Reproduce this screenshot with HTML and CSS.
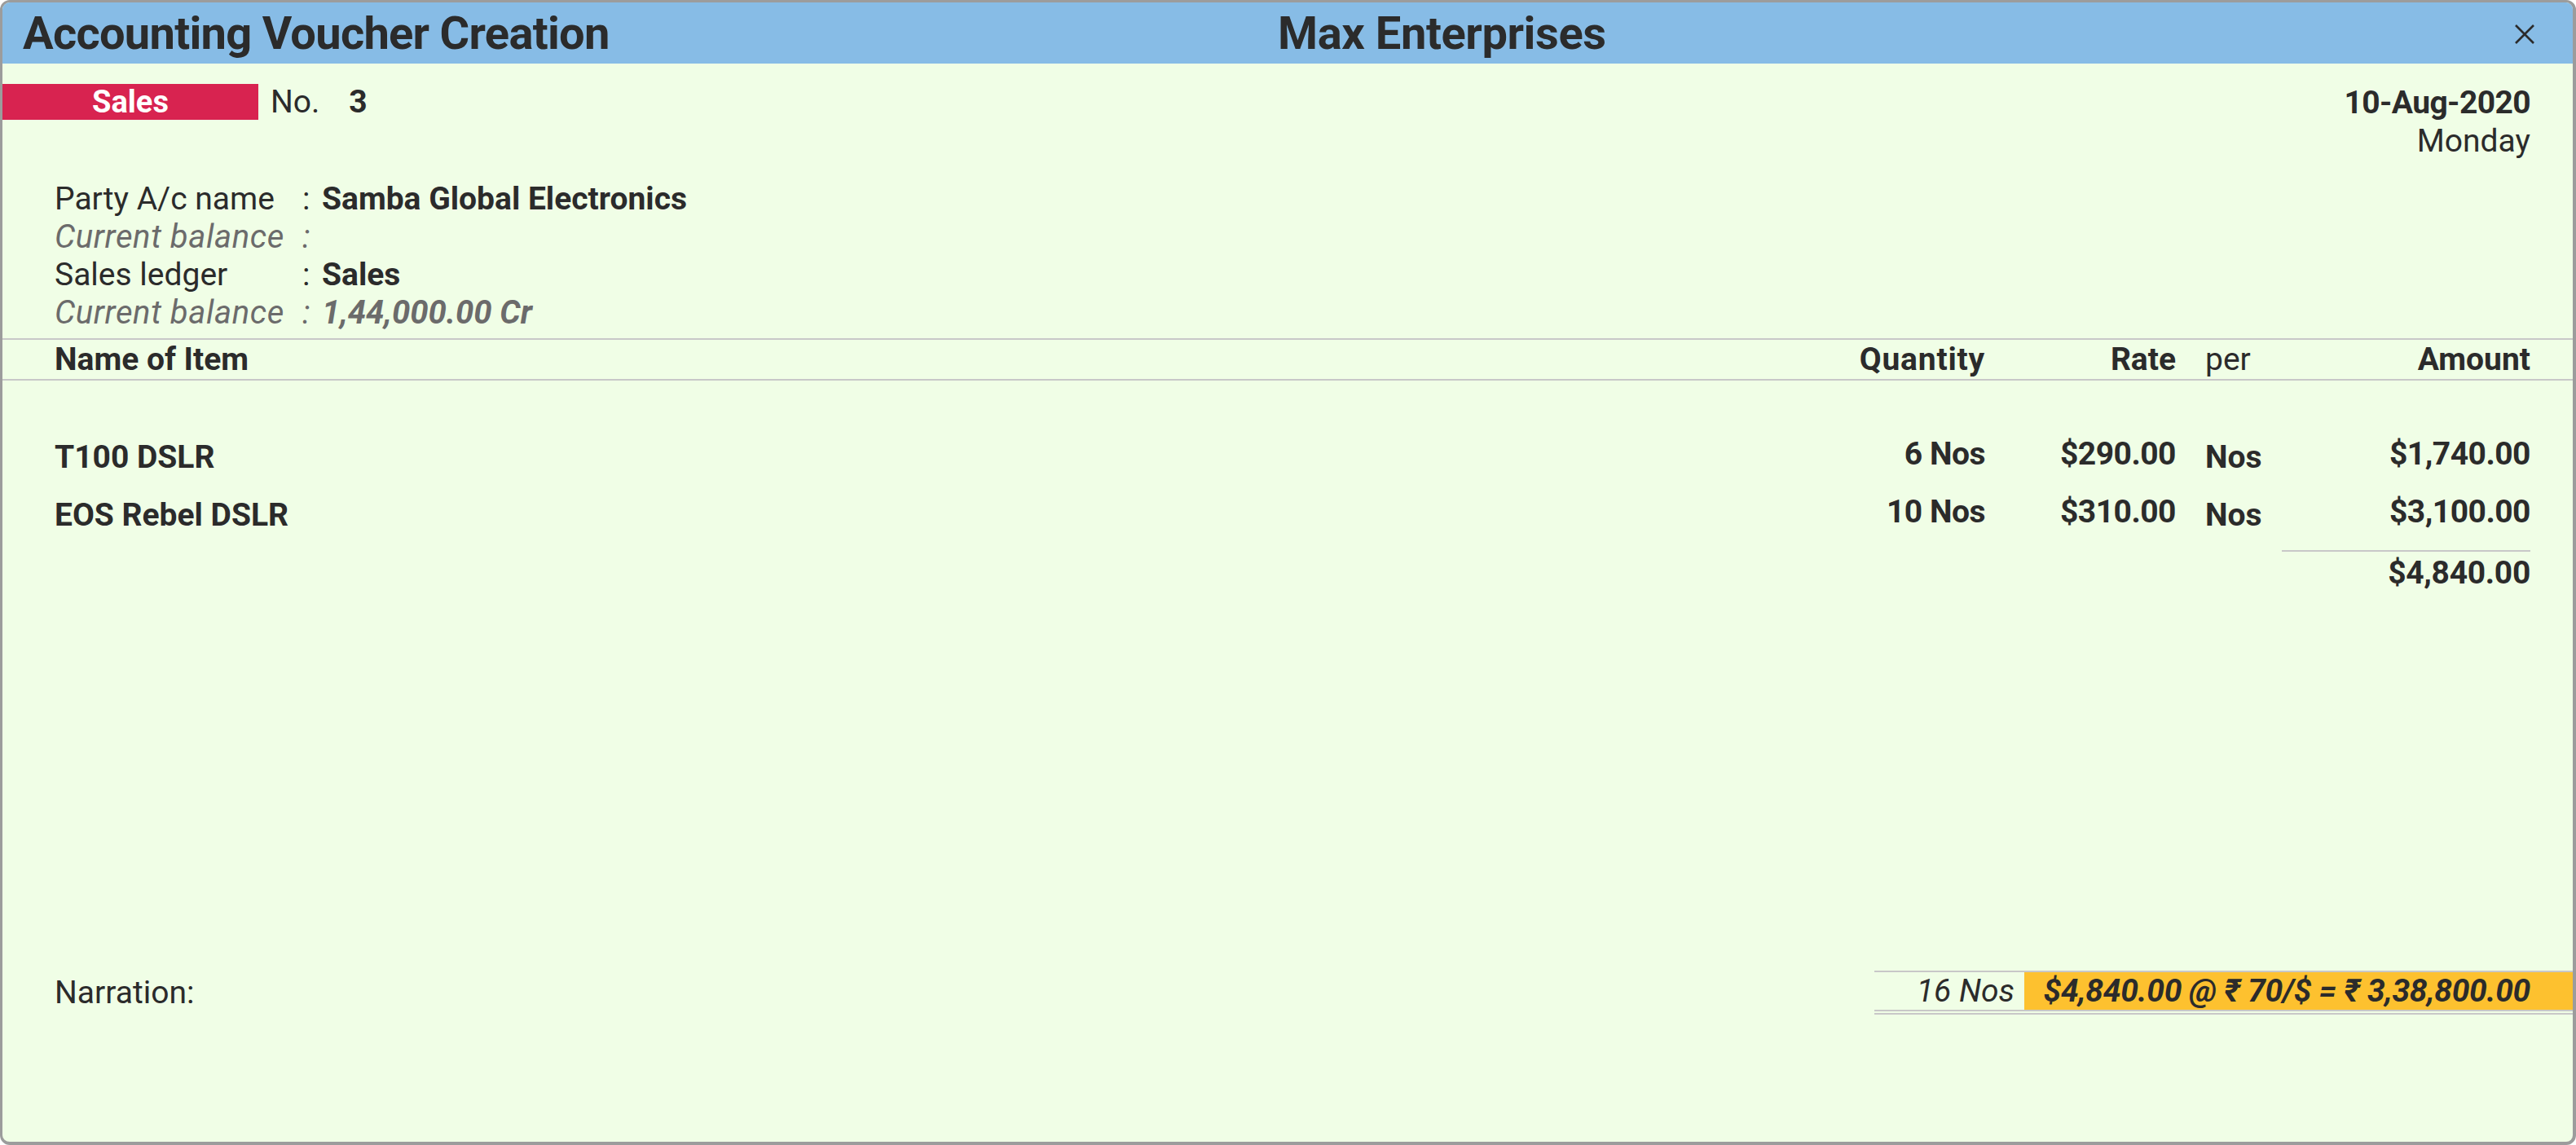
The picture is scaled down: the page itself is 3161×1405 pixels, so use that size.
FILE: index.html
```html
<!DOCTYPE html>
<html lang="en">
<head>
<meta charset="utf-8">
<title>Accounting Voucher Creation</title>
<link rel="stylesheet" href="styles.css">
</head>
<body>
<div class="window">
  <header class="titlebar">
    <div class="title">Accounting Voucher Creation</div>
    <div class="company">Max Enterprises</div>
    <div class="close">
      <svg width="26" height="26" viewBox="0 0 26 26"><path d="M2 2 L24 24 M24 2 L2 24" stroke="#2b2b2b" stroke-width="2.6" fill="none"/></svg>
    </div>
  </header>
  <main class="content">
    <div class="topline">
      <div class="vtype">Sales</div>
      <div class="vno"><span class="lbl">No.</span><span class="num">3</span></div>
      <div class="date">
        <div class="d1">10-Aug-2020</div>
        <div class="d2">Monday</div>
      </div>
    </div>

    <div class="party">
      <div class="prow"><span class="plabel">Party A/c name</span><span class="colon">:</span><span class="pval">Samba Global Electronics</span></div>
      <div class="prow sub"><span class="plabel">Current balance</span><span class="colon">:</span><span class="pval"></span></div>
      <div class="prow"><span class="plabel">Sales ledger</span><span class="colon">:</span><span class="pval">Sales</span></div>
      <div class="prow sub"><span class="plabel">Current balance</span><span class="colon">:</span><span class="pval">1,44,000.00 Cr</span></div>
    </div>

    <div class="thead grid">
      <div class="c-name">Name of Item</div>
      <div class="c-qty">Quantity</div>
      <div class="c-rate">Rate</div>
      <div class="c-per light">per</div>
      <div class="c-amt">Amount</div>
    </div>

    <div class="items">
      <div class="item grid">
        <div class="c-name">T100 DSLR</div>
        <div class="c-qty n">6 Nos</div>
        <div class="c-rate n">$290.00</div>
        <div class="c-per">Nos</div>
        <div class="c-amt n">$1,740.00</div>
      </div>
      <div class="item grid">
        <div class="c-name">EOS Rebel DSLR</div>
        <div class="c-qty n">10 Nos</div>
        <div class="c-rate n">$310.00</div>
        <div class="c-per">Nos</div>
        <div class="c-amt n">$3,100.00</div>
      </div>
      <div class="total grid">
        <div class="c-amt tot">$4,840.00</div>
      </div>
    </div>

    <div class="spacer"></div>

    <div class="footer">
      <div class="narration">Narration:</div>
      <div class="summary">
        <div class="s-qty">16 Nos</div>
        <div class="s-amt">$4,840.00 @ ₹ 70/$ = ₹ 3,38,800.00</div>
      </div>
    </div>
  </main>
</div>
</body>
</html>
```

FILE: styles.css
```css
* { box-sizing: border-box; }
html, body { margin: 0; padding: 0; }
body {
  width: 3161px;
  height: 1405px;
  background: #ffffff;
  font-family: Roboto, "Liberation Sans", sans-serif;
  color: #2b2b2b;
}
.window {
  width: 3161px;
  height: 1405px;
  border: 3px solid #9c9c9c;
  border-bottom-width: 4px;
  border-right-width: 4px;
  border-radius: 12px;
  overflow: hidden;
  background: #f0fee6;
  display: flex;
  flex-direction: column;
}
.titlebar {
  height: 75px;
  flex: none;
  background: #87bce6;
  display: grid;
  grid-template-columns: 1565px auto 1fr;
  align-items: center;
}
.title {
  padding-left: 25px;
  font-size: 56px;
  font-weight: 700;
  letter-spacing: -0.7px;
}
.company {
  font-size: 56px;
  font-weight: 700;
  letter-spacing: -0.4px;
}
.close {
  display: flex;
  justify-content: flex-end;
  padding-right: 46px;
  padding-top: 2px;
}
.close svg { display: block; }

.content {
  flex: 1;
  display: flex;
  flex-direction: column;
  padding: 25px 52px 156px 64px;
}
.topline {
  display: flex;
  align-items: flex-start;
  height: 118px;
}
.vtype {
  margin-left: -64px;
  width: 314px;
  height: 44px;
  background: #d82350;
  color: #fff;
  font-weight: 700;
  font-size: 38px;
  line-height: 44px;
  text-align: center;
}
.vno {
  margin-left: 15px;
  font-size: 39px;
  line-height: 44px;
}
.vno .num { font-weight: 700; margin-left: 36px; }
.date {
  margin-left: auto;
  text-align: right;
  font-size: 39px;
  line-height: 47px;
}
.d1 { font-weight: 700; letter-spacing: -0.6px; }

.party { font-size: 39px; }
.prow {
  display: grid;
  grid-template-columns: 304px 24px 1fr;
  height: 46.5px;
  line-height: 46.5px;
}
.pval { font-weight: 700; }
.prow.sub { color: #6b6b6b; font-style: italic; font-size: 40px; letter-spacing: 0.6px; }
.prow.sub .pval { letter-spacing: 0; }

.grid {
  display: grid;
  grid-template-columns: 1fr 250px 234px 130px 305px;
  align-items: center;
  font-size: 39px;
}
.thead {
  margin: 8px -52px 0 -64px;
  padding: 0 52px 0 64px;
  border-top: 2px solid #c8c8c8;
  border-bottom: 2px solid #c8c8c8;
  height: 52px;
  font-weight: 700;
}
.thead .c-qty { letter-spacing: 0.8px; }
.c-qty, .c-rate, .c-amt { text-align: right; }
.c-per { padding-left: 36px; }
.light { font-weight: 400; }

.items { padding-top: 58px; }
.item {
  height: 71px;
  font-weight: 700;
}
.item .n { padding-bottom: 7px; letter-spacing: -0.5px; }
.total { margin-top: 8px; }
.total .c-amt { grid-column: 5; }
.tot {
  border-top: 2px solid #c8c8c8;
  height: 54px;
  line-height: 52px;
  font-weight: 700;
  letter-spacing: -0.3px;
}

.spacer { flex: 1; }

.footer {
  display: flex;
  align-items: center;
  margin-right: -52px;
}
.narration {
  font-size: 39px;
}
.summary {
  margin-left: auto;
  width: 857px;
  display: flex;
  border-top: 2px solid #c8c8c8;
  border-bottom: 6px double #c8c8c8;
  font-size: 39px;
}
.s-qty {
  width: 184px;
  height: 46px;
  line-height: 46px;
  text-align: right;
  padding-right: 12px;
  font-style: italic;
}
.s-amt {
  flex: 1;
  height: 46px;
  line-height: 46px;
  background: #fdc12f;
  font-weight: 700;
  font-style: italic;
  text-align: right;
  padding-right: 52px;
  letter-spacing: -0.3px;
}
```
